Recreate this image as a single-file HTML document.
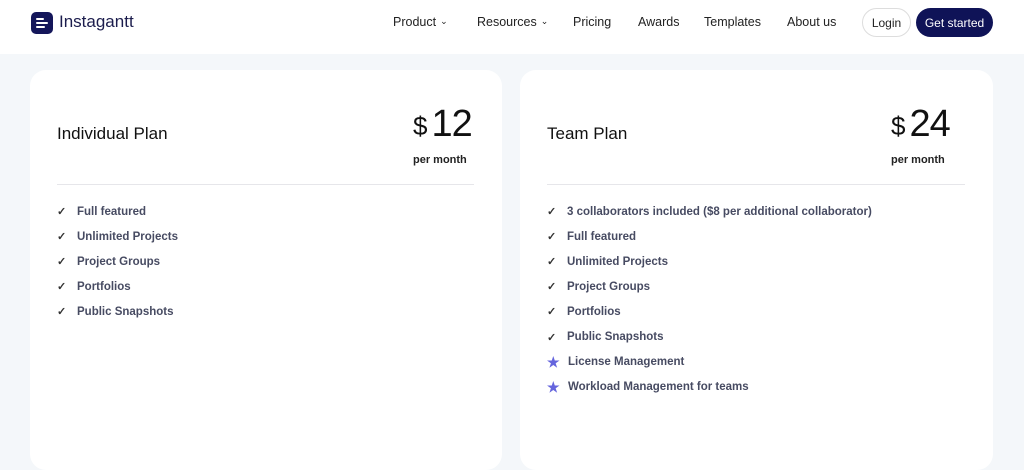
<!DOCTYPE html>
<html><head><meta charset="utf-8"><style>
*{margin:0;padding:0;box-sizing:border-box}
body{width:1024px;height:457px;overflow:hidden;background:#f4f7fa;font-family:"Liberation Sans",sans-serif;color:#1a1a2e;position:relative}
.nav{position:absolute;left:0;top:0;width:1024px;height:54px;background:#fff}
.logo{position:absolute;left:31px;top:12px;width:22px;height:22px;background:#14165a;border-radius:5px}
.logo i{position:absolute;height:2px;background:#fff;border-radius:1px}
.brand{position:absolute;left:59px;top:12px;font-size:17px;color:#1c1d4d}
.menu{position:absolute;top:15px;font-size:12.5px;color:#222}
.menu small{font-size:9px;margin-left:4px;vertical-align:2px}
.btn{position:absolute;top:8px;height:29px;border-radius:15px;font-size:12px;display:flex;align-items:center;justify-content:center}
.card{position:absolute;top:70px;height:400px;background:#fff;border-radius:16px}
.title{position:absolute;left:27px;top:54px;font-size:17px;color:#111}
.price{position:absolute;top:33px;font-size:38px;color:#111;letter-spacing:-1px}
.price span{font-size:26px;vertical-align:1px;margin-right:5px;font-weight:300}
.pm{position:absolute;top:84px;font-size:11px;font-weight:bold;color:#222}
.hr{position:absolute;left:27px;right:28px;top:114px;border-top:1px solid #e6e6ea}
ul{position:absolute;left:27px;top:129px;list-style:none}
li{height:25.1px;font-size:11.5px;font-weight:bold;color:#474b62;display:flex;align-items:center}
li b{display:inline-block;width:20px;color:#333;font-size:11px}
li s{text-decoration:none;display:inline-block;width:21px;color:#6565dd;font-size:14px}
</style></head><body>
<div class="nav">
<div class="logo"><i style="left:5px;top:6px;width:8px"></i><i style="left:5px;top:10px;width:12px"></i><i style="left:5px;top:14px;width:9px"></i></div>
<div class="brand">Instagantt</div>
<div class="menu" style="left:393px">Product<small>&#8964;</small></div>
<div class="menu" style="left:477px">Resources<small>&#8964;</small></div>
<div class="menu" style="left:573px">Pricing</div>
<div class="menu" style="left:638px">Awards</div>
<div class="menu" style="left:704px">Templates</div>
<div class="menu" style="left:787px">About us</div>
<div class="btn" style="left:862px;width:49px;border:1px solid #ddd;color:#222">Login</div>
<div class="btn" style="left:916px;width:77px;background:#0f1357;color:#fff">Get started</div>
</div>
<div class="card" style="left:30px;width:472px">
<div class="title">Individual Plan</div>
<div class="price" style="left:383px"><span>$</span>12</div>
<div class="pm" style="left:383px">per month</div>
<div class="hr"></div>
<ul><li><b>✓</b>Full featured</li><li><b>✓</b>Unlimited Projects</li><li><b>✓</b>Project Groups</li><li><b>✓</b>Portfolios</li><li><b>✓</b>Public Snapshots</li></ul>
</div>
<div class="card" style="left:520px;width:473px">
<div class="title">Team Plan</div>
<div class="price" style="left:371px"><span>$</span>24</div>
<div class="pm" style="left:371px">per month</div>
<div class="hr"></div>
<ul><li><b>✓</b>3 collaborators included ($8 per additional collaborator)</li><li><b>✓</b>Full featured</li><li><b>✓</b>Unlimited Projects</li><li><b>✓</b>Project Groups</li><li><b>✓</b>Portfolios</li><li><b>✓</b>Public Snapshots</li><li><s>★</s>License Management</li><li><s>★</s>Workload Management for teams</li></ul>
</div>
</body></html>
